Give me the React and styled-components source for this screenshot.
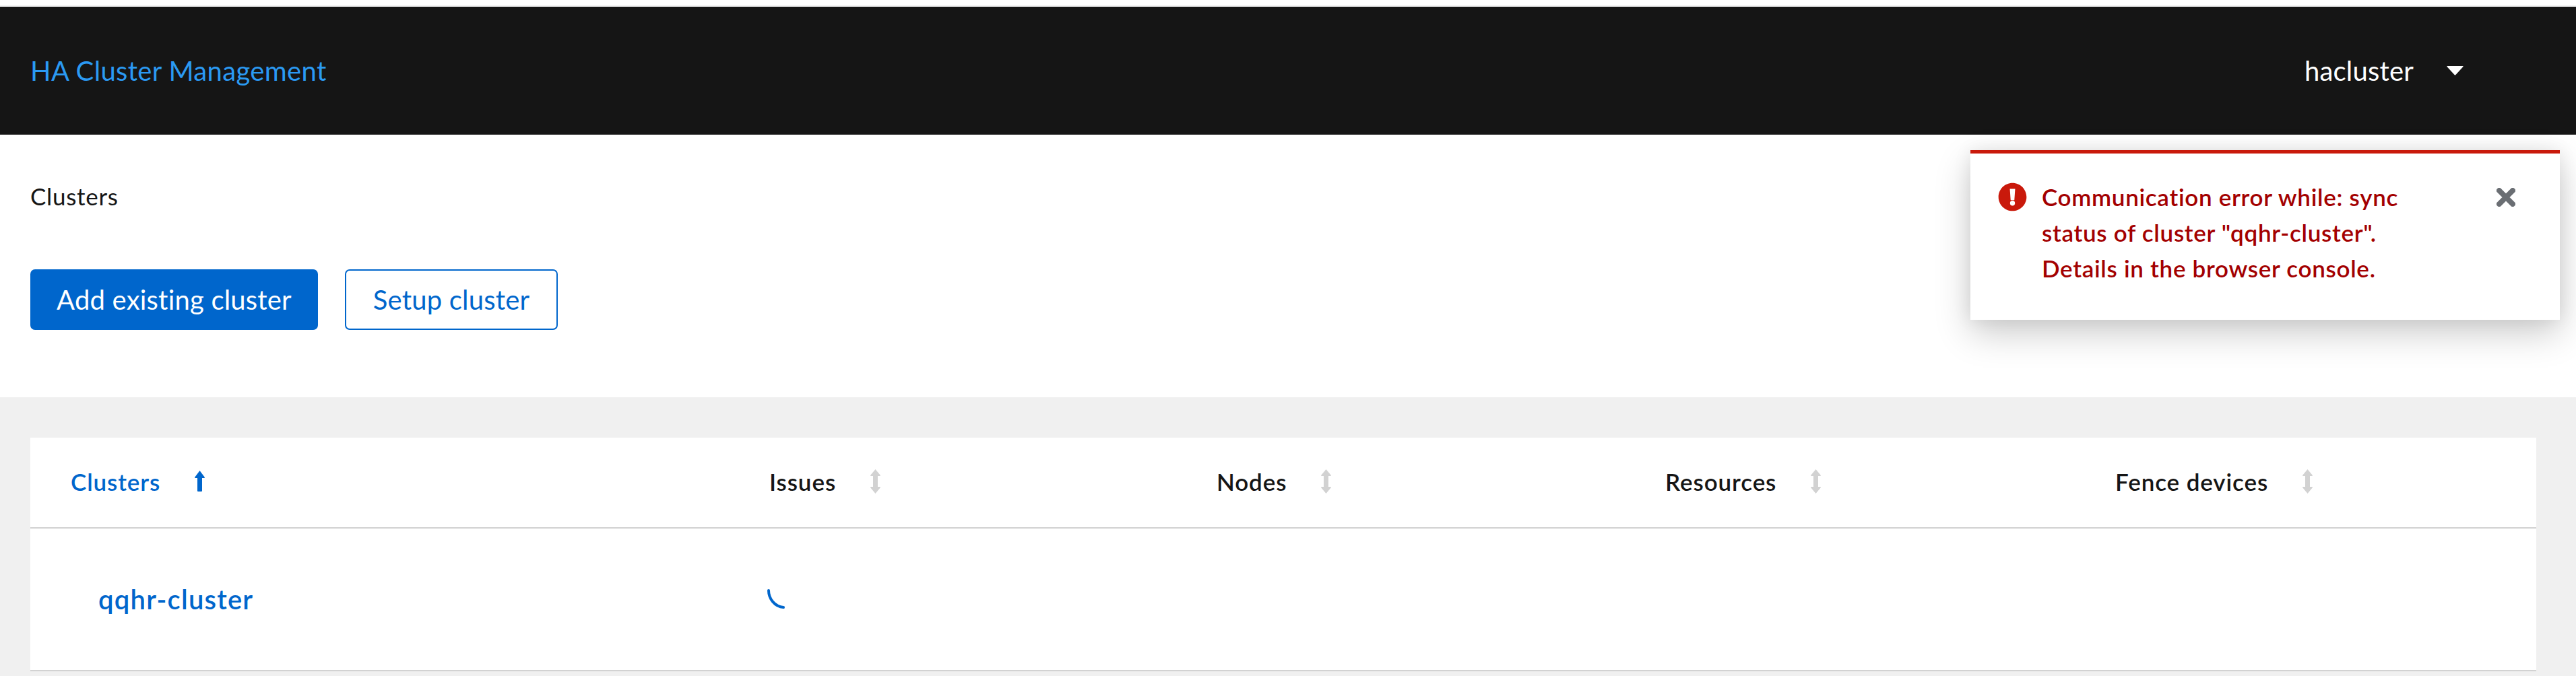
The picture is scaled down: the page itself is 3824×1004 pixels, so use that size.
import React from 'react';
import styled, { createGlobalStyle } from 'styled-components';

const GlobalStyle = createGlobalStyle`
  html, body {
    margin: 0;
    padding: 0;
    background: #fff;
    font-family: Lato, "Noto Sans", sans-serif;
  }
  * { box-sizing: border-box; }
`;

const Page = styled.div`
  position: relative;
  width: 3824px;
  height: 1004px;
  overflow: hidden;
  padding-top: 8px;
  display: flex;
  flex-direction: column;
  background: #fff;
`;

const Masthead = styled.header`
  height: 192px;
  border-top: 2px solid #f0f0f0;
  background: #151515;
  display: flex;
  align-items: center;
  justify-content: space-between;
  padding: 0 167px 0 45px;
  font-size: 40px;
`;

const Brand = styled.a`
  color: #2b9af3;
  letter-spacing: 0.35px;
`;

const UserMenu = styled.div`
  display: flex;
  align-items: center;
  gap: 49px;
  color: #fff;
  letter-spacing: 0.2px;
`;

const Caret = styled.svg`
  width: 25px;
  height: 14px;
  fill: #fff;
`;

const TopSection = styled.section`
  height: 390px;
  padding: 65px 45px 0;
  background: #fff;
`;

const Crumb = styled.div`
  font-size: 35px;
  line-height: 53px;
  color: #151515;
  letter-spacing: 0.7px;
`;

const Actions = styled.div`
  display: flex;
  gap: 40px;
  margin-top: 82px;
`;

const Button = styled.button`
  height: 90px;
  width: ${p => (p.$primary ? '427px' : '316px')};
  padding: 0;
  border-radius: 7px;
  font-family: inherit;
  font-size: 40px;
  letter-spacing: 0.2px;
  border: ${p => (p.$primary ? 'none' : '2px solid #06c')};
  background: ${p => (p.$primary ? '#06c' : '#fff')};
  color: ${p => (p.$primary ? '#fff' : '#06c')};
`;

const Main = styled.main`
  flex: 1;
  background: #f0f0f0;
  padding: 60px 59px 7px 45px;
`;

const Table = styled.div`
  background: #fff;
  border-bottom: 2px solid #d2d2d2;
  height: 347px;
`;

const Row = styled.div`
  display: grid;
  grid-template-columns: 1037px 664px 666px 668px 1fr;
  align-items: center;
`;

const HeadRow = styled(Row)`
  height: 135px;
  padding-bottom: 4px;
  border-bottom: 2px solid #d2d2d2;
`;

const BodyRow = styled(Row)`
  height: 210px;
`;

const HeadCell = styled.div`
  display: flex;
  align-items: center;
  gap: 51px;
  padding-left: 60px;
  font-size: 35px;
  font-weight: 600;
  letter-spacing: 0.9px;
  color: ${p => (p.$active ? '#06c' : '#151515')};
`;

const SortIcon = styled.svg`
  width: 15px;
  height: 36px;
  fill: ${p => (p.$active ? '#06c' : '#d2d2d2')};
`;

const ClusterCell = styled.div`
  padding-left: 101px;
  font-size: 40px;
  font-weight: 600;
  letter-spacing: 1.2px;
  color: #06c;
`;

const SpinnerCell = styled.div`
  padding-left: 56px;
  display: flex;
`;

const Spinner = styled.svg`
  width: 28px;
  height: 30px;
  stroke: #06c;
  fill: none;
  stroke-width: 4;
  stroke-linecap: round;
`;

const Toast = styled.div`
  position: absolute;
  left: 2925px;
  top: 223px;
  width: 875px;
  height: 252px;
  background: #fff;
  border-top: 5px solid #c9190b;
  box-shadow: 0 20px 50px rgba(3, 3, 3, 0.2), 0 0 25px rgba(3, 3, 3, 0.08);
  display: flex;
  padding: 43px 0 0 41px;
`;

const ToastIcon = styled.svg`
  flex: none;
  width: 43px;
  height: 43px;
  fill: #c9190b;
`;

const ToastText = styled.div`
  width: 560px;
  margin-left: 22px;
  margin-top: -5px;
  font-size: 35px;
  line-height: 53px;
  font-weight: 600;
  letter-spacing: 0.7px;
  color: #a30000;
`;

const CloseIcon = styled.svg`
  flex: none;
  width: 28px;
  height: 28px;
  margin: 8px 0 0 115px;
  stroke: #6a6e73;
  stroke-width: 8;
  stroke-linecap: round;
`;

const SortArrows = () => (
  <SortIcon viewBox="0 0 15 36">
    <path d="M7.5 0 L15 9 Q15 10 14 10 H11 V26 H14 Q15 26 15 27 L7.5 36 L0 27 Q0 26 1 26 H4 V10 H1 Q0 10 0 9 Z" />
  </SortIcon>
);

const columns = ['Issues', 'Nodes', 'Resources', 'Fence devices'];

export default function App() {
  return (
    <Page>
      <GlobalStyle />
      <Masthead>
        <Brand>HA Cluster Management</Brand>
        <UserMenu>
          hacluster
          <Caret viewBox="0 0 25 14"><path d="M1 0 H24 Q25 0 24.5 1 L13.5 13 Q12.5 14 11.5 13 L0.5 1 Q0 0 1 0 Z" /></Caret>
        </UserMenu>
      </Masthead>
      <TopSection>
        <Crumb>Clusters</Crumb>
        <Actions>
          <Button $primary>Add existing cluster</Button>
          <Button>Setup cluster</Button>
        </Actions>
      </TopSection>
      <Main>
        <Table>
          <HeadRow>
            <HeadCell $active>
              Clusters
              <SortIcon $active viewBox="0 0 15 36">
                <path d="M7.5 2 L15 12 Q15 13 14 13 H11 V32 Q11 33 10 33 H5 Q4 33 4 32 V13 H1 Q0 13 0 12 Z" />
              </SortIcon>
            </HeadCell>
            {columns.map(c => (
              <HeadCell key={c}>{c}<SortArrows /></HeadCell>
            ))}
          </HeadRow>
          <BodyRow>
            <ClusterCell>qqhr-cluster</ClusterCell>
            <SpinnerCell>
              <Spinner viewBox="0 0 28 30"><path d="M3 2 C3 14 12 26 25 27" /></Spinner>
            </SpinnerCell>
          </BodyRow>
        </Table>
      </Main>
      <Toast>
        <ToastIcon viewBox="0 0 512 512">
          <path d="M256 8C119 8 8 119 8 256s111 248 248 248 248-111 248-248S393 8 256 8zm-47 106h94l-14 200h-66zm47 296a44 44 0 1 1 0-88 44 44 0 0 1 0 88z" />
        </ToastIcon>
        <ToastText>
          Communication error while: sync status of cluster "qqhr-cluster". Details in the browser console.
        </ToastText>
        <CloseIcon viewBox="0 0 28 28">
          <path d="M4 4 L24 24 M24 4 L4 24" />
        </CloseIcon>
      </Toast>
    </Page>
  );
}
